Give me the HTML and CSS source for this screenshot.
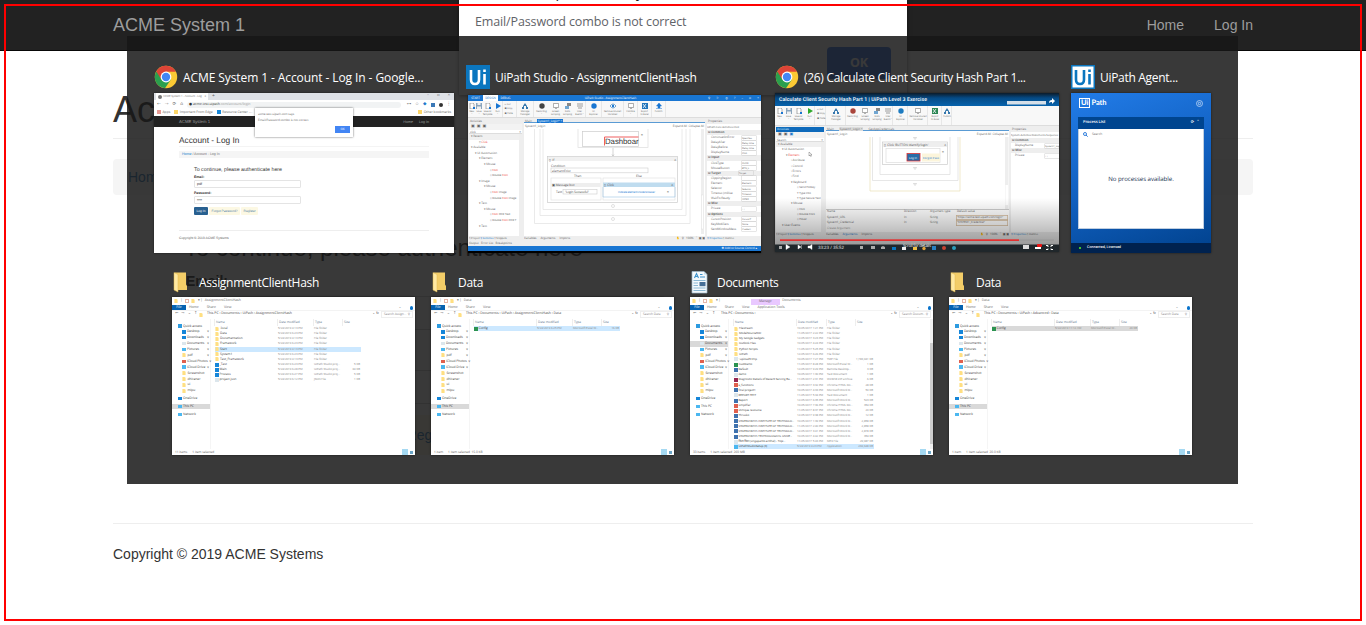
FILE: index.html
```html
<!DOCTYPE html>
<html lang="en">
<head>
<meta charset="utf-8">
<title>ACME System 1 - Account - Log In</title>
<link rel="stylesheet" href="styles.css">
</head>
<body>
<svg class="defs" width="0" height="0" aria-hidden="true">
  <symbol id="chrome" viewBox="0 0 24 24">
    <circle cx="12" cy="12" r="11.2" fill="#fbc934"/>
    <path d="M12 12 2.3 6.4A11.2 11.2 0 0 0 11 23.2L16.9 14.6Z" fill="#2a9f4e"/>
    <path d="M2.3 6.4A11.2 11.2 0 0 1 21.9 6.8H12L7.5 14.8Z" fill="#dd4437"/>
    <circle cx="12" cy="12" r="5.4" fill="#fff"/><circle cx="12" cy="12" r="4.2" fill="#4286f5"/>
  </symbol>
  <symbol id="folder" viewBox="0 0 24 24">
    <path d="M3 2.500H14V14.500L15 16V20H3Z" fill="#f3cd68"/>
    <path d="M2 2.5 6 4.5V22L2 20Z" fill="#ffe9a2" stroke="#e2b84d" stroke-width=".5"/>
  </symbol>
  <symbol id="docs" viewBox="0 0 24 24">
    <path d="M2 1.5H14L17 4.5V23H2Z" fill="#f4f9fc" stroke="#9fb8c8" stroke-width=".7"/>
    <path d="M4.5 8 6.5 3.5 8.5 8M5.3 6.5H7.8M10 4.5H12.5M10 7H15" stroke="#3c92cc" stroke-width="1.1" fill="none"/>
    <path d="M3.5 10.5H15.5M3.5 13H8M3.5 15.500H8M3.500 18H15.500M3.500 20.500H15.500" stroke="#8cb8d4" stroke-width="1"/>
    <rect x="9.500" y="12" width="6" height="4.200" fill="#456e96"/><path d="M14 1.500V4.500H17" fill="#c2dbea"/>
  </symbol>
  <symbol id="mini-folder" viewBox="0 0 4 5"><path d="M0 0H3V.7H4V5H0Z" fill="#ffdf82"/></symbol>
</svg>

<nav class="navbar"><div class="container nav-inner">
  <span class="brand">ACME System 1</span>
  <div class="nav-links"><span>Home</span><span>Log In</span></div>
</div></nav>

<main class="container page">
  <h1>Account - Log In</h1>
  <div class="crumb"><span class="link">Home</span><span class="muted">/ &nbsp;Account - Log In</span></div>
  <form class="login">
    <h2>To continue, please authenticate here</h2>
    <label>Email:</label><div class="field">pdf</div>
    <label>Password:</label><div class="field">••••</div>
    <div class="btns"><span class="btn primary">Log In</span><span class="btn">Forgot Password?</span><span class="btn">Register</span></div>
  </form>
  <footer>Copyright © 2019 ACME Systems</footer>
</main>

<div class="alert">
  <div class="alert-title">acme-test.uipath.com says</div>
  <div class="alert-msg">Email/Password combo is not correct</div>
  <div class="alert-ok">OK</div>
</div>

<section class="switcher">
  <div class="row row-top">
    <article class="item browser-item">
      <header><svg class="ico"><use href="#chrome"/></svg><span>ACME System 1 - Account - Log In - Google...</span></header>
      <div class="thumb browser">
        <div class="b-tabs"><div class="b-tab"><i class="globe"></i><span>ACME System 1 - Account - Log</span><b>×</b></div><span class="b-plus">+</span><div class="b-win"><span>–</span><span>▫</span><span>×</span></div></div>
        <div class="b-tool"><span>←</span><span class="dim">→</span><span>⟳</span><span>⌂</span><div class="b-url">● acme-test.uipath<em>.com/account/login</em></div><span>⊶</span><span>☆</span><span class="blue">◆</span><i class="sq blue-bg"></i><i class="avatar"></i><span>⋮</span></div>
        <div class="b-marks"><span><i class="sq red-bg"></i>Apps</span><span><i class="sq yellow-bg"></i>Important From Edge</span><span><i class="sq sky-bg"></i>Resource Center -...</span><span><i class="globe"></i>New Tab</span><span class="end"><i class="sq yellow-bg"></i>Other bookmarks</span></div>
        <div class="b-nav"><span>ACME System 1</span><span class="end">Home</span><span class="log">Log In</span></div>
        <div class="b-page">
          <div class="b-h1">Account - Log In</div>
          <div class="b-crumb"><span class="blue">Home</span> / Account - Log In</div>
          <div class="b-form">
            <div class="b-h2">To continue, please authenticate here</div>
            <strong>Email:</strong><div class="b-field">pdf</div>
            <strong>Password:</strong><div class="b-field">••••</div>
            <div class="b-btns"><span class="p">Log In</span><span>Forgot Password?</span><span>Register</span></div>
          </div>
          <div class="b-foot">Copyright © 2019 ACME Systems</div>
        </div>
        <div class="b-alert"><p>acme-test.uipath.com says</p><p>Email/Password combo is not correct</p><span>OK</span></div>
      </div>
    </article>

    <article class="item studio-item">
      <header><svg class="ico" viewBox="0 0 24 24"><rect width="24" height="24" fill="#0b76bf"/><path d="M5 5V14.500Q5 19 9 19T13 14.500V5M18.500 9V19.500M18.500 4.500V7" stroke="#fff" stroke-width="2.600" fill="none"/></svg><span>UiPath Studio - AssignmentClientHash</span></header>
      <div class="thumb studio" id="studio">
        <div class="s-title"><span>START</span><span class="on">DESIGN</span><span>DEBUG</span><span class="mid">UiPath Studio - AssignmentClientHash</span><span class="ctl"><i>⚲</i><i>⚐</i><i>◎</i><i>?</i><i>–</i><i>▫</i><i>×</i></span></div>
        <div class="s-ribbon" data-ribbon="studio"></div>
        <div class="s-body">
          <div class="pane"><div class="p-title">Activities</div><div class="p-tools">▣ &nbsp;▣ &nbsp;▣</div><div class="p-search">click<b>×</b></div><div class="tree" data-tree="studio"></div><div class="p-tabs">▯ Project <span class="blue">⚲ Activities</span> ▯ Snippets</div></div>
          <div class="pane center"><div class="d-tabs"><span>Main</span><span class="on">System1_Login* ×</span></div><div class="d-path"><span>System1_Login</span><span>Expand All &nbsp;Collapse All</span></div>
            <svg class="canvas" width="180" height="105" viewBox="0 0 180 105">
              <g fill="none" stroke="#e4e4e4" stroke-width=".8"><path d="M10.500 0V94.500H166V0M16 0V86.500H162V0M19 0V80.500H158V0"/></g>
              <rect x="54" y="-1" width="70" height="19.500" fill="#fff" stroke="#ddd" stroke-width=".7"/><rect x="58.500" y="2.500" width="56" height="15" fill="#fff" stroke="#ccc" stroke-width=".7"/>
              <path d="M80.500 16.500V8H114.500" stroke="#ef5f5f" fill="none"/><text class="big" x="81" y="15.200" textLength="33.500">Dashboar</text><text x="117" y="7">≡</text>
              <path d="M89 19V27M88 25.500 89 27 90 25.500" stroke="#bbb" stroke-width=".6" fill="none"/>
              <rect x="23.500" y="27.500" width="130" height="46" fill="#fff" stroke="#ccc" stroke-width=".7"/><rect x="24" y="28" width="129" height="4" fill="#f1f1f1"/><text x="25" y="31.500">▯ &nbsp;If</text><text x="150" y="31.500">∧</text>
              <text x="27" y="37.500">Condition</text><rect x="27" y="39" width="97" height="4.800" fill="#fff" stroke="#ccc" stroke-width=".6"/><text x="28" y="42.800">elementExist</text><text x="50" y="47.500">Then</text><text x="112" y="47.500">Else</text>
              <g fill="#fff" stroke="#ddd" stroke-width=".6"><rect x="27" y="49" width="50" height="22"/><rect x="79" y="49" width="72" height="22"/></g>
              <rect x="27.500" y="54" width="49" height="4" fill="#eee"/><text x="28" y="57.300">▣ Message box</text><rect x="79" y="53.500" width="72" height="4.500" fill="#bfdcef"/><text x="80" y="57">▯ &nbsp;Click</text><text x="147" y="57">∧</text>
              <text x="32" y="64">Text</text><rect x="39" y="60.500" width="34" height="4.500" fill="#fff" stroke="#ccc" stroke-width=".6"/><text x="41" y="64" textLength="24">"Login Successful"</text><text class="act" x="94" y="64" textLength="37">Indicate element inside browser</text><text x="143" y="64">≡</text>
              <path d="M79 58V68H151V58" fill="none" stroke="#9bc5e2" stroke-width=".6"/>
              <g stroke="#ccc" fill="#fff" stroke-width=".6"><circle cx="89" cy="77" r="1.500"/><circle cx="89" cy="90" r="1.500"/></g>
              <rect x="177" y="0" width="3" height="105" fill="#eee"/><rect x="177.500" y="66" width="2" height="34" fill="#fff" stroke="#ddd" stroke-width=".4"/>
            </svg>
            <div class="d-foot"><span>Variables</span><span>Arguments</span><span>Imports</span><span class="end">✋ &nbsp;⚲ &nbsp; 100% &nbsp; ˅ &nbsp;▣ ▣</span></div></div>
          <div class="pane"><div class="p-title">Properties</div><div class="p-sub">UiPath.Core.Activities.Click</div><div class="props" data-props="studio"></div><div class="p-tabs"><span class="blue">⚲ Properties</span> ▯ Outline</div></div>
        </div>
        <div class="s-out">Output &nbsp; Error List &nbsp; Breakpoints</div>
        <div class="s-status">✚ Add to Source Control ▴</div>
      </div>
    </article>

    <article class="item video-item">
      <header><svg class="ico"><use href="#chrome"/></svg><span>(26) Calculate Client Security Hash Part 1...</span></header>
      <div class="thumb studio video">
        <div class="v-title">Calculate Client Security Hash Part 1 | UiPath Level 3 Exercise</div>
        <div class="s-ribbon" data-ribbon="video"></div>
        <div class="s-body">
          <div class="pane"><div class="p-title on">Activities</div><div class="p-tools">▣ &nbsp;▣ &nbsp;<span class="blue">▣</span></div><div class="p-search">Search<b>×</b></div><div class="tree" data-tree="video"></div><div class="p-tabs">▯ Project <span class="blue">⚲ Activities</span> ▯ Snippets</div></div>
          <div class="pane center"><div class="d-tabs"><span>Main</span><span class="grey">System1_Login ×</span><span>GetAppCredentials</span></div><div class="d-path"><span>System1_Login</span><span>Expand All &nbsp;Collapse All</span></div>
            <svg class="canvas" width="183" height="72" viewBox="0 0 183 72">
              <g fill="none" stroke="#ddd" stroke-width=".7"><path d="M44 0V54H134V0" stroke="#e9dfb5"/><path d="M46.500 0V43.500H132V0M54 0V37.500H124V0"/></g>
              <path d="M87.500.5h3l-1.500 2zM87.500 30.500h3l-1.500 2zM87.500 46.500h3l-1.500 2z" fill="#fff" stroke="#bbb" stroke-width=".5"/>
              <rect x="56.500" y="5" width="65" height="22.500" fill="#fff" stroke="#ccc" stroke-width=".7"/><rect x="57" y="5.500" width="64" height="4.500" fill="#eee"/><text x="58" y="9">▯ &nbsp;Click 'BUTTON Identify/login'</text><text x="118" y="9">∧</text>
              <rect x="60" y="11.500" width="54" height="14" fill="#fff" stroke="#ddd" stroke-width=".7"/><rect x="96" y="16.500" width="18" height="8" fill="#fcf5db"/><text class="act" x="97" y="21.500" textLength="16">Forgot Pass</text><rect x="81" y="16.500" width="13" height="7.500" fill="#286da8" stroke="#d33" stroke-width=".8"/><text class="inv" x="83" y="21.500">Log In</text><text x="116" y="16">≡</text>
              <rect x="179" y="0" width="3.500" height="72" fill="#eee"/><rect x="179.500" y="48" width="2.500" height="20" fill="#fff"/>
            </svg>
            <div class="args"><span>Name</span><span>Direction</span><span>Argument type</span><span>Default value</span><span>System1_URL</span><span>In</span><span>String</span><span class="box">"https://acme-test.uipath.com/login"</span><span>System1_Credential</span><span>In</span><span>String</span><span class="box">"SYSTEM1_Credential"</span><span class="dim">Create Argument</span></div>
            <div class="d-foot"><span>Variables</span><span class="blue">Arguments</span><span>Imports</span><span class="end">✋ &nbsp;⚲ &nbsp; 100% &nbsp; ˅ &nbsp;▣ ▣</span></div></div>
          <div class="pane"><div class="p-title">Properties</div><div class="p-sub">System.Activities.Statements.Sequence</div><div class="props" data-props="video"></div><div class="p-tabs"><span class="blue">⚲ Properties</span> ▯ Outline</div></div>
        </div>
        <svg class="v-over" width="284" height="159" viewBox="0 0 284 159">
          <defs><linearGradient id="shade" x2="0" y2="1"><stop offset="0" stop-color="#000" stop-opacity="0"/><stop offset="1" stop-color="#000" stop-opacity=".35"/></linearGradient></defs>
          <rect y="105" width="284" height="47" fill="url(#shade)"/>
          <rect y="151.500" width="284" height="8" fill="#20272b"/>
          <rect x="5" y="146.500" width="239" height="1.200" fill="#f00"/><rect x="244" y="146.500" width="35" height="1.200" fill="#999"/>
          <path d="M11 151.500v5l4-2.500zM23 152v4l3-2zM26.500 152v4M33 153h2l2-1.500v5l-2-1.500h-2z" fill="#fff" stroke="#fff" stroke-width=".4"/>
          <text x="43" y="155.500" textLength="26">33:23 / 35:52</text><text x="128" y="153.500" textLength="28">Scroll for details</text>
          <g fill="#aaa"><rect x="4" y="153" width="3" height="3"/><rect x="85" y="153" width="3" height="3"/><rect x="96" y="153" width="4" height="3"/><path d="M106 154l2-1 2 1v2h-4z"/></g>
          <rect x="117" y="154" width="4" height="3" fill="#0875c0"/><rect x="127" y="154" width="4" height="3" fill="#eee"/><rect x="138" y="154" width="4" height="3" fill="#f0bf45"/><circle cx="149" cy="155.500" r="1.700" fill="#e2a33c"/><rect x="157" y="153" width="4" height="4" fill="#287fc0"/><circle cx="169" cy="155" r="2" fill="#c84232"/><circle cx="179" cy="155" r="2" fill="#2c9dbc"/>
          <rect x="248" y="152" width="6" height="4" fill="#ddd"/><path d="M260 155h6" stroke="#fff" stroke-width="2"/><rect x="262" y="151" width="5" height="3" rx="1" fill="#e11"/><path d="M271 152.500h2v1.500m3 0v-1.500h2m0 4h-2v-1m-3 0v1h-2" stroke="#fff" fill="none"/>
          <path d="M274 10q0-3 3-3V5l3 3-3 3V9q-2 0-3 1z" fill="#fff"/>
          <rect x="232" y="8" width="39" height="3.500" fill="#d5dfe8"/>
          <path d="M34 59v4l1-1 .7 1.500.6-.3-.6-1.400h1.300z" fill="#fff" stroke="#555" stroke-width=".4"/>
        </svg>
      </div>
    </article>

    <article class="item agent-item">
      <header><svg class="ico" viewBox="0 0 24 24"><rect x=".75" y=".75" width="22.500" height="22.500" fill="#fff" stroke="#0b76bf" stroke-width="1.500"/><path d="M5 5V14.500Q5 19 9 19T13 14.500V5M18.500 9V19.500M18.500 4.500V7" stroke="#0b76bf" stroke-width="2.600" fill="none"/></svg><span>UiPath Agent...</span></header>
      <div class="thumb agent">
        <div class="a-head"><b>Ui</b><span>Path</span><svg width="7" height="7" viewBox="0 0 7 7" fill="none" stroke="#d7e6fa" stroke-width=".7"><circle cx="3.500" cy="3.500" r="3"/><circle cx="3.500" cy="3.500" r="1.200"/></svg></div>
        <div class="a-card"><div class="a-bar"><span>Process List</span><em>⟳ &nbsp; ˄</em></div><div class="a-search"><svg width="5" height="5" viewBox="0 0 5 5" fill="none" stroke="#1e73d8" stroke-width=".9"><circle cx="2" cy="2" r="1.500"/><path d="M3 3 4.700 4.700"/></svg>Search</div><div class="a-empty">No processes available.</div></div>
        <div class="a-status"><i></i>Connected, Licensed</div>
      </div>
    </article>
  </div>
  <div class="row row-bottom" id="explorers"></div>
</section>
<div class="frame"></div>
<script src="app.js"></script>
</body>
</html>
```
FILE: styles.css
```css
* { box-sizing: border-box; }
body { margin: 0; position: relative; width: 1366px; height: 625px; overflow: hidden; background: #fff; color: #333; font: 14px/20px "Liberation Sans", Arial, sans-serif; }
.defs { position: absolute; }
i, em { font-style: normal; }
.container { width: 1140px; margin: 0 auto; }
.navbar { height: 51px; background: #222; border-bottom: 1px solid #080808; color: #9d9d9d; }
.nav-inner { display: flex; justify-content: space-between; align-items: center; height: 50px; }
.brand { font-size: 18px; }
.nav-links { display: flex; gap: 30px; }
.page h1 { margin: 39px 0 20px; height: 49px; border-bottom: 1px solid #eee; font-size: 36px; line-height: 40px; font-weight: 400; }
.crumb { height: 36px; padding: 8px 15px; background: #f5f5f5; border-radius: 4px; display: flex; gap: 8px; }
.link { color: #337ab7; }
.muted { color: #777; }
.login { width: 480px; margin: 40px 0 0 73px; height: 288px; }
.login h2 { margin: 0 0 0 -2px; height: 36px; font-size: 24px; line-height: 26px; font-weight: 400; white-space: nowrap; }
.login label { display: block; height: 25px; font-weight: 700; }
.field { height: 34px; border: 1px solid #ccc; border-radius: 4px; padding: 6px 12px; margin-bottom: 15px; }
.btns { display: flex; gap: 4px; margin-top: -4px; }
.btn { padding: 10px 12px; height: 40px; border-radius: 4px; background: #fcf8e3; color: #337ab7; }
.btn.primary { background: #286090; color: #fff; }
footer { height: 102px; border-top: 1px solid #eee; padding-top: 20px; }

.alert { position: absolute; left: 459px; top: -20px; width: 448px; height: 115px; padding: 0 16px; background: #fff; box-shadow: 0 1px 4px rgba(0,0,0,.5); display: flex; flex-direction: column; font-family: "Open Sans", sans-serif; }
.alert-title { height: 30px; font-size: 14.5px; line-height: 24px; color: #202124; letter-spacing: -.2px; }
.alert-msg { height: 37px; font-size: 12.5px; line-height: 24px; color: #5f6368; letter-spacing: -.13px; white-space: nowrap; }
.alert-ok { align-self: flex-end; width: 64px; height: 32px; border-radius: 4px; background: #3f7ce9; color: #fff; text-align: center; font: 700 12.5px/32px "Open Sans", sans-serif; }
.frame { position: absolute; left: 4px; top: 4px; width: 1358px; height: 617px; border: 2px solid red; }

.switcher { position: absolute; left: 127px; top: 36px; width: 1111px; height: 448px; padding-top: 29px; background: rgba(22,22,22,.85); color: #fff; }
.row { display: flex; align-items: flex-start; }
.row-top { height: 205px; padding-left: 27px; gap: 14px; }
.row-bottom { padding-left: 45px; gap: 16px; }
.item header { display: flex; align-items: center; gap: 5px; height: 24px; margin-bottom: 4px; font: 12px/24px "Open Sans", sans-serif; letter-spacing: -.3px; white-space: nowrap; }
.item header span { padding-top: 2px; }
.item.browser-item header { letter-spacing: -.09px; }
.ico { width: 24px; height: 24px; flex: none; }
.studio-item header { margin-left: -2px; margin-bottom: 6px; }
.agent-item { margin-left: -2px; }
.row-bottom header { gap: 3px; margin-bottom: 3px; }
.row-bottom header span { padding-top: 1px; }
.thumb { position: relative; overflow: hidden; background: #fff; color: #666; font: 3.500px/4.800px "Open Sans", "DejaVu Sans", sans-serif; letter-spacing: -.04px; white-space: nowrap; box-shadow: 0 0 2px rgba(0,0,0,.6); text-rendering: geometricPrecision; }
.end { margin-left: auto; }
.blue { color: #2179cc; }
.dim { color: #999; }
.sq { display: inline-block; width: 4px; height: 4px; }
.red-bg { background: #e69a94; } .yellow-bg { background: #fbd568; } .sky-bg { background: #1687d9; } .blue-bg { background: #3b78b7; }
.globe { display: inline-block; width: 4px; height: 4px; flex: none; border-radius: 50%; background: #777; }

/* browser preview */
.browser { width: 300px; height: 160px; }
.b-tabs { display: flex; height: 7px; background: #dee1e6; align-items: center; gap: 4px; }
.b-tab { display: flex; align-items: center; gap: 1px; width: 52px; height: 7px; margin-left: 2px; padding: 0 2px; background: #fff; font-size: 2.800px; }
.b-tab span { width: 41px; color: #777; }
.b-plus { font-size: 5px; }
.b-win { display: flex; gap: 8px; margin-left: auto; margin-right: 4px; font-size: 4px; }
.b-tool { display: flex; height: 9px; align-items: center; gap: 4px; padding: 0 3px; font-size: 4.500px; }
.b-url { flex: 1; height: 6px; margin-right: 2px; border-radius: 3px; background: #f1f3f4; padding-left: 2px; font-size: 3.500px; line-height: 6px; color: #333; }
.b-url em { color: #999; }
.avatar { width: 4px; height: 4px; border-radius: 2px; background: #333; }
.b-marks { display: flex; height: 7px; gap: 4px; align-items: center; padding: 0 3px; font-size: 3.400px; }
.b-marks span { display: flex; align-items: center; gap: 1.500px; }
.b-nav { display: flex; gap: 6px; height: 11px; padding: 0 25px; background: #222; color: #999; align-items: center; font: 3.700px "Liberation Sans", sans-serif; }
.b-nav span:first-child { font-size: 4.300px; }
.b-page { padding: 8px 25px 0; font-family: "Liberation Sans", sans-serif; color: #333; }
.b-h1 { height: 12px; font-size: 8.300px; line-height: 11px; border-bottom: 1px solid #f4f4f4; margin-bottom: 4px; letter-spacing: 0; }
.b-crumb { height: 7px; background: #f5f5f5; padding-left: 3px; font-size: 3.600px; line-height: 7px; color: #777; }
.b-form { width: 122px; padding: 9px 0 0 15px; height: 72px; display: flex; flex-direction: column; }
.b-h2 { height: 8px; font-size: 5.300px; line-height: 6px; letter-spacing: 0; }
.b-form strong { height: 5px; font-size: 3.500px; line-height: 4px; }
.b-field { height: 8px; border: 1px solid #e4e4e4; border-radius: 1px; padding-left: 2px; margin-bottom: 3px; font-size: 3.600px; line-height: 6px; }
.b-btns { display: flex; gap: 1px; font-size: 3.300px; line-height: 8px; color: #5b85a8; }
.b-btns span { background: #fcf8e3; padding: 0 2.500px; height: 8px; border-radius: 1px; }
.b-btns .p { background: #286090; color: #fff; }
.b-foot { border-top: 1px solid #eee; padding-top: 5px; font-size: 3.400px; color: #666; }
.b-alert { position: absolute; left: 101px; top: 15px; width: 98px; height: 29px; padding: 4px 3px; background: #fff; box-shadow: 0 0 2px rgba(0,0,0,.6); font-size: 3px; }
.b-alert p { margin: 0; height: 6px; }
.b-alert span { display: block; width: 15px; height: 7px; margin: 2px 0 0 auto; background: #4285f4; color: #fff; text-align: center; font-size: 3px; line-height: 7px; }

/* automation studio previews */
.studio { width: 293px; height: 158px; display: flex; flex-direction: column; background: #eee; border-bottom: 2px solid #000; font-size: 3px; line-height: 4px; }
.s-title { display: flex; height: 6px; flex: none; background: #1976d2; color: #fff; line-height: 6px; }
.s-title > span { width: 15px; text-align: center; }
.s-title .on { background: #fff; color: #1976d2; }
.s-title .mid { width: 195px; }
.s-title .ctl { display: flex; justify-content: space-between; width: 53px; padding-right: 2px; }
.s-ribbon { display: flex; height: 17px; flex: none; background: #f8f8f8; border-bottom: 1px solid #ddd; overflow: hidden; }
.tool { display: flex; flex-direction: column; align-items: center; text-align: center; padding-top: 2px; font-size: 2.300px; line-height: 3px; white-space: pre; }
.tool svg { width: 6px; height: 6px; flex: none; margin-bottom: .5px; }
.tool.sep { box-shadow: inset -1px 0 #e7e7e7; }
.tool.text { display: block; text-align: left; padding-left: 2px; line-height: 4.300px; padding-top: 2px; }
.s-body { display: grid; grid-template-columns: 53px 181px 1fr; gap: 2px; flex: 1; min-height: 0; padding: 1px 0 0 1px; }
.pane { display: flex; flex-direction: column; background: #fff; min-height: 0; min-width: 0; overflow: hidden; }
.p-title { height: 5px; flex: none; padding-left: 1px; background: #eee; line-height: 5px; }
.p-title.on { background: #0e6abb; color: #d9eaff; }
.p-tools { height: 6px; flex: none; padding-left: 2px; background: #f3f3f3; line-height: 6px; font-size: 4px; }
.p-search { display: flex; justify-content: space-between; height: 4px; flex: none; padding: 0 1px; box-shadow: inset 0 -1px #ddd; }
.p-sub { height: 6px; flex: none; line-height: 6px; font-size: 2.700px; }
.p-tabs { height: 5px; margin-top: auto; background: #eee; line-height: 5px; flex: none; font-size: 2.700px; }
.tree { flex: 1; min-height: 0; overflow: hidden; border-right: 3px solid #eee; }
.tree div { height: 5.600px; line-height: 5.600px; }
.tree div:first-child { background: #f0f0f0; }
.video .tree div { height: 5.400px; line-height: 5.400px; }
.tree .hit { color: #f0443a; }
.d0 { padding-left: 2px; } .d1 { padding-left: 6px; } .d2 { padding-left: 10px; } .d3 { padding-left: 15px; } .tree .d4 { padding-left: 21px; font-size: 2.800px; }
.d-tabs { display: flex; height: 4px; flex: none; gap: 5px; background: #eee; box-shadow: inset 0 -1px #5a9bd4; line-height: 4px; padding-left: 1px; }
.d-tabs .on { background: #1976d2; color: #fff; padding: 0 1px; }
.d-tabs .grey { background: #ddd; padding: 0 1px; }
.d-path { display: flex; justify-content: space-between; height: 6px; flex: none; line-height: 6px; padding: 0 1px; }
.canvas { display: block; flex: none; }
.canvas text { font: 3.200px "Open Sans", sans-serif; fill: #555; }
.canvas .big { font: 7.800px "Liberation Sans", sans-serif; fill: #333; }
.canvas .act { font-size: 2.800px; fill: #1976d2; }
.canvas .inv { font-size: 2.900px; fill: #fff; }
.v-over text { font: 4.400px "Open Sans", sans-serif; fill: #eee; }
.d-foot { display: flex; gap: 4px; height: 5px; margin-top: auto; background: #eee; line-height: 5px; flex: none; }
.props { flex: 1; min-height: 0; overflow: hidden; }
.prop { display: flex; height: 5.100px; line-height: 5.100px; padding-left: 4px; align-items: center; }
.prop span { width: 27px; }
.prop b { width: 14px; height: 4px; line-height: 4px; font-weight: 400; font-size: 2.500px; box-shadow: 0 0 0 .5px #ccc; margin-left: 4px; }
.prop.head { padding-left: 1px; background: #eee; font-weight: 700; }
.s-out { height: 5px; flex: none; line-height: 5px; padding-left: 1px; }
.s-status { height: 5px; flex: none; background: #1976d2; color: #fff; text-align: right; padding-right: 4px; line-height: 5px; }
.video { width: 284px; height: 159px; border: 0; padding-bottom: 15px; }
.v-title { height: 13px; flex: none; background: linear-gradient(#0d1b29, #054a85 5px, #0763ad); color: #fff; padding-left: 4px; font: 500 5.200px/15px Roboto, sans-serif; letter-spacing: .08px; }
.video .s-ribbon { height: 20px; }
.video .s-body { grid-template-columns: 48px 183px 1fr; }
.v-over { position: absolute; left: 0; top: 0; }
.args { display: grid; grid-template-columns: 77px 26px 27px 52px; grid-auto-rows: 5.500px; box-shadow: inset 0 1px #ccc; line-height: 5.500px; }
.args span { padding-left: 1px; }
.args .box { box-shadow: inset 0 0 0 .7px #d8bd9c; font-size: 2.800px; }

/* agent preview */
.agent { width: 140px; height: 160px; background: linear-gradient(160deg, #227ce8, #1160c0 50%, #00418c); color: #fff; display: flex; flex-direction: column; }
.a-head { display: flex; align-items: center; height: 24px; padding: 0 8px 4px; font: 700 7.500px/8px Lato, sans-serif; }
.a-head b { height: 10px; padding: 0 1px; color: #fff; border: 1px solid #fff; font-size: 7.500px; line-height: 8px; }
.a-head svg { margin-left: auto; }
.a-head span { margin-left: 1px; }
.a-card { width: 126px; height: 112px; margin-left: 7px; background: #fff; border: 1px solid #bfcee0; border-top: 0; color: #20304f; }
.a-bar { display: flex; justify-content: space-between; height: 12px; margin: 0 -1px; padding: 0 5px; background: #00458f; color: #fff; font-weight: 600; font-size: 4px; line-height: 12px; }
.a-search { display: flex; align-items: center; gap: 4px; height: 10px; padding-left: 4px; font-size: 3.300px; color: #777; }
.a-empty { padding-top: 34px; text-align: center; font-size: 6.100px; line-height: 12px; }
.a-status { display: flex; gap: 6px; align-items: center; height: 10px; margin-top: auto; padding-left: 8px; background: #00224f; font-weight: 600; }
.a-status i { width: 2px; height: 2px; background: #43c32d; }

/* file explorer previews */
.explorer { width: 243px; height: 158px; display: flex; flex-direction: column; }
.e-title { display: flex; align-items: center; gap: 2.500px; height: 8px; padding-left: 2px; flex: none; }
.mini { width: 4px; height: 4px; flex: none; }
.e-title .check { width: 4px; height: 4px; border: 1px solid #e6b8aa; }
.e-title .manage { width: 29px; margin-left: 28px; background: #e9c8ff; text-align: center; height: 6px; line-height: 6px; margin-top: 2px; }
.e-ribbon { display: flex; height: 5px; flex: none; gap: 8px; line-height: 5px; padding-right: 2px; }
.e-ribbon .file { width: 14px; margin-right: -5px; background: #0562b1; color: #fff; text-align: center; }
.e-ribbon .help { width: 3.500px; height: 3.500px; margin-top: 1px; border-radius: 50%; background: #0a74cc; }
.e-addr { display: flex; align-items: center; height: 9px; flex: none; padding: 0 3px; box-shadow: inset 0 1px #f3f3f3; color: #444; }
.e-arrows { display: flex; gap: 3px; width: 24px; color: #777; font-size: 4px; }
.e-path { flex: 1; padding-left: 4px; }
.e-find { display: flex; justify-content: space-between; width: 30px; margin-left: 3px; box-shadow: 0 0 0 1px #eee; padding: 0 2px; color: #888; font-size: 3.200px; }
.e-main { display: flex; flex: 1; min-height: 0; }
.e-side { width: 38px; padding-top: 4px; flex: none; box-shadow: 1px 0 #f5f5f5; color: #444; font-size: 3.300px; }
.e-side div { display: flex; align-items: center; gap: 1.500px; height: 5.900px; padding-left: 10px; padding-right: 1px; }
.e-side .top { padding-left: 6px; }
.e-side .gap { margin-top: 2px; }
.e-side .sel { background: #d9d9d9; }
.e-side i { width: 3.500px; height: 3.500px; flex: none; }
.e-side u { margin-left: auto; text-decoration: none; font-size: 2.800px; }
.e-list { padding-left: 5px; width: 151px; flex: none; }
.line { display: grid; grid-template-columns: 63px 36px 29px 18px; height: 5.150px; line-height: 5.150px; align-items: center; color: #888; font-size: 2.900px; }
.line.headings { height: 7px; color: #63798f; font-size: 3.200px; }
.line.headings span { padding-left: 1px; box-shadow: -1px 0 #eee; line-height: 7px; }
.line .name { display: flex; align-items: center; gap: 1px; color: #444; padding-right: 2px; font-size: 3.200px; }
.line .size { text-align: right; padding-right: 1px; }
.line i { width: 3.500px; height: 4px; flex: none; }
.line.sel { background: #cce8ff; }
.line.inactive { background: #d9d9d9; }
.documents .e-list { padding-left: 6px; width: 146px; }
.documents .line { grid-template-columns: 63px 30px 29px 18px; }
.documents .line .name { font-size: 2.900px; }
.documents .line.headings { font-size: 3.100px; }
.e-scroll { width: 3px; margin-left: auto; background: linear-gradient(#f0f0f0 0 24px, #cdcdcd 24px 125px, #f0f0f0 125px); }
.e-status { display: flex; gap: 5px; height: 6px; flex: none; padding-left: 3px; line-height: 6px; font-size: 3.200px; }
.e-status .view { width: 6px; height: 6px; margin-left: auto; background: #a5d9f2; }
.e-status .large { width: 3px; height: 3px; margin: 1.500px 2px 0 -3px; background: #6ca7c9; }
```
FILE: app.js
```js
const palette = { f: '#ffdf82', b: '#1686d9', s: '#4bb7f0', w: '#dce6ec', g: '#2b9350', c: '#e0604e', d: '#3f72ae', m: '#962651' };
const chip = key => key === 'f' ? '<svg class="mini"><use href="#mini-folder"/></svg>' : `<i style="background:${palette[key]}"></i>`;

// Each entry: icon key, name, date, type, size
const windows = [
  { icon: 'folder', title: 'AssignmentClientHash', path: 'This PC › Documents › UiPath › AssignmentClientHash', find: 'Search Assign...', status: '11 items', picked: '1 item selected', sel: 4, files: [
    ...['.local', 'Data', 'Documentation', 'Framework', 'Start', 'System1', 'Test_Framework'].map((n, i) => ['f', n, `5/24/2019 ${i % 2 ? '6:23' : '4:13'} PM`, 'File folder', '']),
    ['b', '_Test', '5/24/2019 6:23 PM', 'UiPath Studio proj...', '5 KB'], ['b', 'Main', '5/24/2019 6:28 PM', 'UiPath Studio proj...', '60 KB'], ['b', 'Process', '5/24/2019 6:27 PM', 'UiPath Studio proj...', '5 KB'], ['w', 'project.json', '5/24/2019 6:12 PM', 'JSON File', '1 KB']] },
  { icon: 'folder', title: 'Data', path: 'This PC › Documents › UiPath › AssignmentClientHash › Data', find: 'Search Data', status: '1 item', picked: '1 item selected &nbsp;15.0 KB', sel: 0, files: [['g', 'Config', '5/24/2019 6:25 PM', 'Microsoft Excel W...', '16 KB']] },
  { icon: 'docs', title: 'Documents', path: 'This PC › Documents ›', find: 'Search Docum...', status: '33 items', picked: '1 item selected &nbsp;269 MB', sel: 23, docs: true, files: [
    ['f', 'Filestream'], ['f', 'ModelSource50C'], ['f', 'My Google Gadgets'], ['f', 'Outlook Files'], ['f', 'Python Scripts'], ['f', 'UiPath'],
    ['w', '~upload5.tmp', '', 'TMP File', '1,783,941 KB'], ['g', 'CustDemo', '', 'Microsoft Excel W...', '1 KB'], ['d', 'Default', '', 'Remote Desktop...', '3 KB'], ['w', 'demo', '', 'Text Document', '1 KB'], ['m', 'Diagnostic Details of Decent Serving Ba...', '', 'WinRAR ZIP archive', '6 KB'], ['c', 'e_functions', '', 'Chrome HTML Do...', '28 KB'], ['d', 'final project1', '', 'Microsoft Word D...', '50 KB'], ['w', 'REPORT.TEXT', '', 'Text Document', '1 KB'], ['d', 'Report', '', 'Microsoft Word D...', '523 KB'], ['c', 'simplifier', '', 'Chrome HTML Do...', '354 KB'], ['c', 'stimque resource', '', 'Chrome HTML Do...', '20 KB'], ['d', 'Thrusko', '', 'Microsoft Word D...', '12 KB'],
    ['d', 'VISVESVARAYA INSTITUTE OF TECHNOLO...', '', 'Microsoft Word D...', '2,858 KB'], ['d', 'VISVESVARAYA INSTITUTE OF TECHNOLO...', '', 'Microsoft Word D...', '2,858 KB'], ['d', 'VISVESVARAYA INSTITUTE OF TECHNOLO...', '', 'Microsoft Word D...', '2,878 KB'], ['d', 'VISVESVARAYA TECHNOLOGICAL UNIVE...', '', 'Microsoft Word D...', '354 KB'], ['w', 'विश्व विद्या (singapanto-erithal) - Topi...', '', 'MP4 File', '29,987 KB'], ['s', 'UiPathStudioSetup (3)', '5/24/2019 4:23 PM', 'Application', '269,648 KB']] },
  { icon: 'folder', title: 'Data', path: 'This PC › Documents › UiPath › Advanced › Data', find: 'Search Data', status: '1 item', picked: '1 item selected &nbsp;20.0 KB', sel: 0, inactive: true, files: [['g', 'Config', '5/22/2019 11:12 AM', 'Microsoft Excel W...', '20 KB']] }
];
const places = [['b', 'Desktop'], ['b', 'Downloads'], ['w', 'Documents'], ['s', 'Pictures'], ['f', 'pdf'], ['c', 'iCloud Photos'], ['s', 'iCloud Drive'], ['f', 'Screenshot'], ['f', 'dhiraner'], ['f', 'ui'], ['f', 'mipu']];

function explorer(w) {
  const side = `<div class="top"><i style="background:#2d9be0"></i>Quick access</div>` +
    places.map((p, i) => `<div class="${w.docs && i === 2 ? 'sel' : ''}">${chip(p[0])}${p[1]}${i < 7 ? '<u>⚲</u>' : ''}</div>`).join('') +
    ['OneDrive', 'This PC', 'Network'].map((n, i) => `<div class="top gap ${i === 1 && !w.docs ? 'sel' : ''}">${chip(i ? 's' : 'b')}${n}</div>`).join('');
  const files = w.files.map((f, i) => {
    const cls = i !== w.sel ? '' : w.inactive ? 'inactive' : 'sel';
    const date = f[2] || `${i % 3 + 10}/25/2017 ${i % 9 + 1}:${21 + i} PM`;
    return `<div class="line ${cls}"><span class="name">${chip(f[0])}${f[1]}</span><span>${date}</span><span>${f[3] || 'File folder'}</span><span class="size">${f[4] || ''}</span></div>`;
  }).join('');
  return `<article class="item"><header><svg class="ico"><use href="#${w.icon}"/></svg><span>${w.title}</span></header>
    <div class="thumb explorer ${w.docs ? 'documents' : ''}">
      <div class="e-title">${chip('f')}<span>|</span><i class="check"></i>${chip('f')}<span>▾ |</span>${w.docs ? '<span class="manage">Manage</span>' : ''}<span>${w.title}</span></div>
      <div class="e-ribbon"><span class="file">File</span><span>Home</span><span>Share</span><span>View</span>${w.docs ? '<span>Application Tools</span>' : ''}<span class="end">⌄</span><i class="help"></i></div>
      <div class="e-addr"><div class="e-arrows"><span>←</span><span class="dim">→</span><span>⌄</span><span>↑</span></div>${chip(w.docs ? 'w' : 'f')}<span class="e-path">${w.path}</span><span>⌄ ↻</span><span class="e-find"><span>${w.find}</span><span>⚲</span></span></div>
      <div class="e-main"><div class="e-side">${side}</div><div class="e-list"><div class="line headings"><span>Name</span><span>Date modified</span><span>Type</span><span>Size</span></div>${files}</div>${w.docs ? '<div class="e-scroll"></div>' : ''}</div>
      <div class="e-status"><span>${w.status}</span><span>${w.picked}</span><i class="view"></i><i class="large"></i></div>
    </div></article>`;
}
document.getElementById('explorers').innerHTML = windows.map(explorer).join('');

const shapes = {
  page: '<path d="M1 0H4L5 1V6H1Z" fill="#fff" stroke="#777" stroke-width=".6"/><path d="M4 4H6V6H4Z" fill="#1976d2"/>',
  save: '<path d="M0 0H6V6H0Z" fill="#8aa5bd"/><path d="M1.500 0H4.500V2H1.500ZM1 3.500H5V6H1Z" fill="#eee"/>',
  play: '<path d="M1 0 6 3 1 6Z" fill="COLOR"/>',
  tree: '<path d="M3 0 5 3H1ZM0 4H2V6H0ZM4 4H6V6H4Z" fill="#3778ad"/><path d="M1 4 3 2 5 4" stroke="#3778ad" fill="none"/>',
  dot: '<circle cx="3" cy="3" r="2.700" fill="COLOR"/>',
  screen: '<path d="M.4.500H5.600V4.500H.4ZM2 5.600H4" fill="#fff" stroke="#888" stroke-width=".7"/>',
  scrape: '<path d="M2 0H6V3H2Z" fill="#888"/><path d="M0 3H4V6H0Z" fill="#71a6d1"/>',
  text: '<path d="M0 1H6M0 3H6M1 5H5" stroke="#777" stroke-width=".7"/>',
  eye: '<path d="M0 3Q3-1 6 3Q3 7 0 3Z" fill="#fff" stroke="#347fbc" stroke-width=".7"/><circle cx="3" cy="3" r="1.200" fill="#1976d2"/>',
  excel: '<path d="M0 0H6V6H0Z" fill="COLOR"/><path d="M1 1 4 5M4 1 1 5" stroke="#fff" stroke-width=".8"/>',
  up: '<path d="M3 0 5.500 3H4V5H2V3H.5ZM0 5.500H6" fill="#1976d2" stroke="#1976d2" stroke-width=".5"/>'
};
const ribbons = {
  studio: [['page', 'New\n˅', 7.5], ['save', 'Save\n˅', 7], ['page', 'Save as\nTemplate', 10], ['play', 'Run\n˅', 10, 1], [null, '✂ Cut\n▣ Copy\n▣ Paste', 14, 1], ['tree', 'Manage\nPackages', 17, 1], ['dot', 'Recording\n˅', 16, 0, '#444'], ['screen', 'Screen\nScraping', 12], ['scrape', 'Data\nScraping', 12], ['text', 'User\nEvents ˅', 12, 1], ['dot', 'UI\nExplorer', 16, 1], ['eye', 'Remove Unused\nVariables', 22, 1], ['screen', 'Validate\n˅', 14, 1], ['excel', 'Export\nto Excel', 14, 1, '#2275bb'], ['up', 'Publish', 14, 1]],
  video: [['page', 'New\n˅', 9], ['save', 'Save\n˅', 9], ['page', 'Save as\nTemplate', 11], ['play', 'Run\n˅', 11, 1, '#2faa2b'], [null, '✂ Cut\n▣ Copy\n▣ Paste', 11, 1], ['tree', 'Manage\nPackages', 20, 1], ['dot', 'Recording\n˅', 13, 0, '#a9453c'], ['screen', 'Screen\nScraping', 12], ['scrape', 'Data\nScraping', 12], ['text', 'User\nEvents ˅', 10, 1], ['dot', 'UI\nExplorer', 15, 1, '#1d7bc0'], ['screen', 'Remove Unused\nVariables', 20, 1], ['excel', 'Export\nto Excel', 14, 1, '#2a8554'], ['tree', 'Publish', 10, 1]]
};
document.querySelectorAll('[data-ribbon]').forEach(el => {
  el.innerHTML = ribbons[el.dataset.ribbon].map(([shape, label, width, sep, color]) =>
    `<div class="tool ${sep ? 'sep' : ''} ${shape ? '' : 'text'}" style="width:${width}px">${shape ? `<svg viewBox="0 0 6 6">${shapes[shape].replace('COLOR', color || '#1976d2')}</svg>` : ''}${label}</div>`).join('');
});

const trees = {
  studio: ['0▾ Recent', '2▯ *Click', '0▾ Available', '1▾ UI Automation', '2▾ Element', '3▾ Mouse', '4▯ *Click', '4▯ Double *Click', '2▾ Image', '3▾ Mouse', '4▯ *Click Image', '4▯ Double *Click Image', '2▾ Text', '3▾ Mouse', '4▯ *Click OCR Text', '4▯ Double *Click OCR T', '2▾ Text'],
  video: ['0▾ Available', '1▾ UI Automation', '2▾ *Element', '3› Attribute', '3› Control', '3› Errors', '3› Find', '3▾ Keyboard', '4▯ Send Hotkey', '4T Type Into', '4T Type Secure Text', '3▾ Mouse', '4▯ Click', '4▯ Double Click', '4▯ Hover', '1▾ User Events']
};
document.querySelectorAll('[data-tree]').forEach(el => {
  el.innerHTML = trees[el.dataset.tree].map(t => `<div class="d${t[0]}">${t.slice(1).replace(/\*(\w+)/, '<span class="hit">$1</span>')}</div>`).join('');
});

const props = {
  studio: ['#Common', 'ContinueOnError|Specifies', 'DelayAfter|Delay time', 'DelayBefore|Delay time', 'DisplayName|Click', '#Input', 'ClickType|CLICK', 'MouseButton|BTN_L', '#Target|Target', 'ClippingRegion| ', 'Element|Element', 'Selector|Selector', 'Timeout (millise|Timeout', 'WaitForReady|INTER', '#Misc', 'Private|▢', '#Options', 'CursorPosition|CursorP', 'KeyModifiers|None', 'SendWindowMess|If select'],
  video: ['#Common', 'DisplayName|System1_Login', '#Misc', 'Private|▢']
};
document.querySelectorAll('[data-props]').forEach(el => {
  el.innerHTML = props[el.dataset.props].map(row => {
    const [name, value] = row.replace('#', '⊟ ').split('|');
    return `<div class="prop ${row[0] === '#' ? 'head' : ''}"><span>${name}</span>${value ? `<b>${value}</b>` : ''}</div>`;
  }).join('');
});
```
